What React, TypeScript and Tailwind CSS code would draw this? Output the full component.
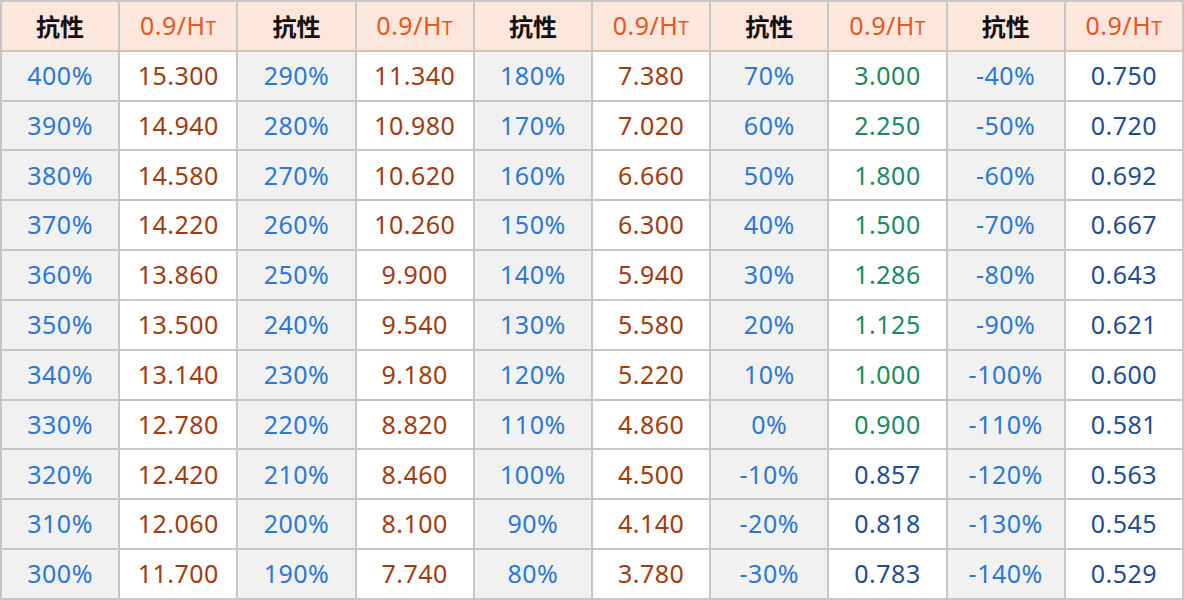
const rows: [string, string][][] = [
  [['400%', '15.300'], ['290%', '11.340'], ['180%', '7.380'], ['70%', '3.000'], ['-40%', '0.750']],
  [['390%', '14.940'], ['280%', '10.980'], ['170%', '7.020'], ['60%', '2.250'], ['-50%', '0.720']],
  [['380%', '14.580'], ['270%', '10.620'], ['160%', '6.660'], ['50%', '1.800'], ['-60%', '0.692']],
  [['370%', '14.220'], ['260%', '10.260'], ['150%', '6.300'], ['40%', '1.500'], ['-70%', '0.667']],
  [['360%', '13.860'], ['250%', '9.900'], ['140%', '5.940'], ['30%', '1.286'], ['-80%', '0.643']],
  [['350%', '13.500'], ['240%', '9.540'], ['130%', '5.580'], ['20%', '1.125'], ['-90%', '0.621']],
  [['340%', '13.140'], ['230%', '9.180'], ['120%', '5.220'], ['10%', '1.000'], ['-100%', '0.600']],
  [['330%', '12.780'], ['220%', '8.820'], ['110%', '4.860'], ['0%', '0.900'], ['-110%', '0.581']],
  [['320%', '12.420'], ['210%', '8.460'], ['100%', '4.500'], ['-10%', '0.857'], ['-120%', '0.563']],
  [['310%', '12.060'], ['200%', '8.100'], ['90%', '4.140'], ['-20%', '0.818'], ['-130%', '0.545']],
  [['300%', '11.700'], ['190%', '7.740'], ['80%', '3.780'], ['-30%', '0.783'], ['-140%', '0.529']],
];

function valueColor(v: string) {
  const n = parseFloat(v);
  if (n > 3) return 'text-[#a33b0e]';
  if (n >= 0.9) return 'text-[#1a8a5c]';
  return 'text-[#1f4d92]';
}

export default function App() {
  return (
    <div
      className="grid h-[600px] w-[1184px] grid-cols-10 grid-rows-12 gap-[2px] bg-[#c6c6c6] p-[2px] text-[25px] tracking-[0.5px]"
      style={{ fontFamily: '"Noto Sans", "Noto Sans CJK SC", sans-serif' }}
    >
      {[0, 1, 2, 3, 4].map((i) => (
        <div key={'h' + i} className="contents">
          <div
            className="flex items-center justify-center bg-[#fde6dc] text-[24px] font-bold tracking-normal text-[#111]"
            style={{ fontFamily: '"Noto Sans CJK SC", sans-serif' }}
          >
            抗性
          </div>
          <div className="flex items-center justify-center bg-[#fde6dc] text-[#e8561c]">
            <span>
              0.9/H<span className="text-[19px]">T</span>
            </span>
          </div>
        </div>
      ))}
      {rows.map((row, r) =>
        row.map(([res, val], c) => (
          <div key={r + '-' + c} className="contents">
            <div className="flex items-center justify-center bg-[#f1f1f1] text-[#2b78d6]">{res}</div>
            <div className={`flex items-center justify-center bg-white ${valueColor(val)}`}>{val}</div>
          </div>
        ))
      )}
    </div>
  );
}
